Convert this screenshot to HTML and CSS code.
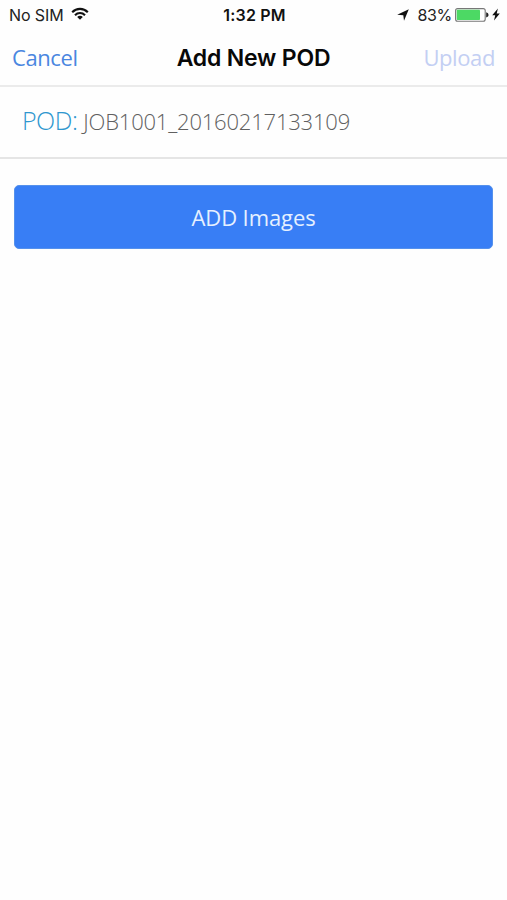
FILE: index.html
```html
<!DOCTYPE html>
<html lang="en">
<head>
<meta charset="utf-8">
<title>Add New POD</title>
<link rel="stylesheet" href="styles.css">
</head>
<body>
<div class="status">
  <div class="status-left">
    <span class="carrier">No SIM</span>
    <svg class="wifi" width="18" height="14" viewBox="0 0 18 14" fill="none" stroke="#111" stroke-width="2.1">
      <path d="M1.2 5.2C5.6.7 12.4.7 16.8 5.2"/>
      <path d="M4 8.2C6.8 5.3 11.2 5.3 14 8.2"/>
      <path d="M9 12.7L6.2 9.9C7.8 8.3 10.2 8.3 11.8 9.9Z" fill="#111" stroke="none"/>
    </svg>
  </div>
  <span class="clock">1:32 PM</span>
  <div class="status-right">
    <svg class="location" width="12" height="12" viewBox="0 0 12 12"><path d="M11.8.2L7 11.8L6.3 6.3L.2 5.8Z" fill="#111"/></svg>
    <span class="percent">83%</span>
    <svg class="battery" width="34" height="14" viewBox="0 0 34 14">
      <rect x=".6" y=".6" width="29.6" height="12.6" rx="2" fill="#fff" stroke="#777" stroke-width="1.1"/>
      <rect x="1.7" y="1.7" width="23.3" height="10.4" rx=".8" fill="#4cd964"/>
      <path d="M31.2 4.3Q33.6 5 33.6 6.9T31.2 9.5Z" fill="#222"/>
    </svg>
    <svg class="bolt" width="8" height="13" viewBox="0 0 8 13"><path d="M5.9.5L.2 7.2H3.2L2 12.5L7.8 5.5H4.7Z" fill="#111"/></svg>
  </div>
</div>
<header class="nav">
  <span class="cancel">Cancel</span>
  <h1 class="title">Add New POD</h1>
  <span class="upload">Upload</span>
</header>
<main>
  <div class="pod"><span class="pod-label">POD:</span><span class="pod-value">JOB1001_20160217133109</span></div>
  <button class="add" type="button">ADD Images</button>
</main>
</body>
</html>
```
FILE: styles.css
```css
* { box-sizing: border-box; }
body {
  margin: 0;
  min-height: 900px;
  background: #fefefe;
  font-family: "Open Sans", sans-serif;
}
.status, .nav {
  display: grid;
  grid-template-columns: 1fr auto 1fr;
  align-items: center;
}
.status {
  height: 29px;
  padding: 0 7px 0 9px;
  font-family: Inter, sans-serif;
  font-size: 16px;
  color: #222;
}
.status-left, .status-right { display: flex; align-items: center; }
.status-right { justify-content: flex-end; }
.carrier { letter-spacing: -0.1px; }
.wifi { margin: 0 0 1px 7px; }
.clock { font-weight: 600; color: #111; letter-spacing: 0.2px; }
.percent { margin: 0 3px 0 8px; letter-spacing: -0.3px; }
.bolt { margin-left: 3px; }
.nav {
  height: 58px;
  padding: 0 12px 1px;
  border-bottom: 2px solid #ebebeb;
  font-size: 22px;
}
.cancel { color: #4a86e0; letter-spacing: -0.4px; }
.title {
  margin: 0;
  padding-top: 2px;
  font-family: Inter, sans-serif;
  font-size: 23px;
  font-weight: 600;
  letter-spacing: -0.2px;
  color: #080808;
}
.upload { justify-self: end; color: #c3cff3; letter-spacing: -0.4px; }
.pod {
  display: flex;
  align-items: baseline;
  height: 72px;
  padding: 16px 22px 0;
  border-bottom: 2px solid #e5e5e5;
  font-weight: 300;
}
.pod-label { font-size: 25px; letter-spacing: -0.5px; color: #2f97cf; }
.pod-value {
  margin-left: 6px;
  font-size: 22px;
  letter-spacing: -0.2px;
  color: #606060;
}
.add {
  display: block;
  width: 479px;
  height: 64px;
  margin: 26px 14px 0;
  padding: 0 0 1px;
  border: 1px solid #5591ec;
  border-radius: 5px;
  background: #387ef5;
  color: #e5f0ff;
  font: 400 22px "Open Sans", sans-serif;
  letter-spacing: -0.1px;
}
```
